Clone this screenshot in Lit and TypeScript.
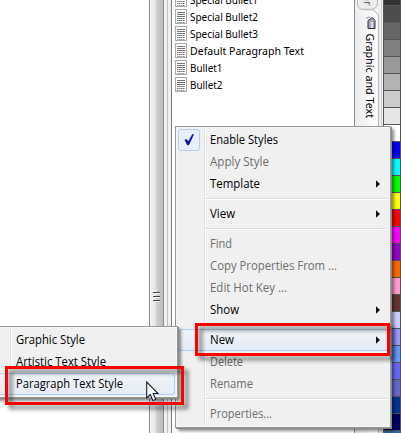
import { LitElement, html, css, svg } from "lit";
import { customElement } from "lit/decorators.js";
import { styleMap } from "lit/directives/style-map.js";

type Entry = { label: string; w: number; off?: boolean; sub?: boolean; check?: boolean; hot?: boolean } | null;

const MAIN: Entry[] = [
  { label: "Enable Styles", w: 68, check: true },
  { label: "Apply Style", w: 59, off: true },
  { label: "Template", w: 50, sub: true },
  null,
  { label: "View", w: 25, sub: true },
  null,
  { label: "Find", w: 22, off: true },
  { label: "Copy Properties From ...", w: 127, off: true },
  { label: "Edit Hot Key ...", w: 77, off: true },
  { label: "Show", w: 29, sub: true },
  null,
  { label: "New", w: 24, sub: true, hot: true },
  { label: "Delete", w: 33, off: true },
  { label: "Rename", w: 43, off: true },
  null,
  { label: "Properties...", w: 62, off: true },
];

const SUB: Entry[] = [
  { label: "Graphic Style", w: 69 },
  { label: "Artistic Text Style", w: 90 },
  { label: "Paragraph Text Style", w: 107, hot: true },
];

const STYLES: [string, number][] = [
  ["Special Bullet1", 68],
  ["Special Bullet2", 68],
  ["Special Bullet3", 68],
  ["Default Paragraph Text", 114],
  ["Bullet1", 32.5],
  ["Bullet2", 32.5],
];

const SWATCHES = [
  "#333", "#4d4d4d", "#666", "#808080", "#999", "#b3b3b3", "#ccc", "#e6e6e6", "#fff",
  "#00f", "#0ff", "#0f0", "#ff0", "#f00", "#f0f", "#90c", "#f60", "#f9c", "#633", "#ccf",
  "#99f", "#69f", "#66f", "#66c", "#039", "#006", "#36a",
];

const label = (text: string, w: number, size: number) => html`<svg class="label" width=${w + 4} height="18">
  <text x="0" y="13" font-size=${size} textLength=${w} lengthAdjust="spacingAndGlyphs">${text}</text>
</svg>`;

@customElement("popup-menu")
export class PopupMenu extends LitElement {
  static properties = { items: { attribute: false } };
  declare items: Entry[];
  static styles = css`
    :host {
      display: block;
      box-sizing: border-box;
      background: #f0f0f0;
      border: 1px solid #979797;
      padding: 2px;
      box-shadow: inset 0 0 0 1px #f6f6f6, 1px 1px 0 #8a8a8a, 3px 3px 3px rgba(0, 0, 0, 0.45);
    }
    .items { position: relative; }
    .items::before {
      content: "";
      position: absolute;
      left: 26px; top: 0; bottom: 0;
      width: 1px;
      background: #e0e0e0;
      border-right: 1px solid #fff;
    }
    .row {
      position: relative;
      box-sizing: border-box;
      height: 22px;
      display: flex;
      align-items: center;
      padding: 0 8px 0 32px;
      font-family: "Open Sans", "Noto Sans", sans-serif;
      fill: #000;
    }
    .off { fill: #6d6d6d; }
    .hot {
      background: linear-gradient(rgba(240, 244, 250, 0.9), rgba(228, 235, 246, 0.9));
      box-shadow: inset 0 0 0 1px #aecff7;
      border-radius: 3px;
    }
    .label { display: block; flex: none; overflow: visible; }
    .arrow { margin-left: auto; display: block; }
    .box {
      position: absolute;
      left: 0; top: 0;
      box-sizing: border-box;
      width: 22px; height: 22px;
      border: 1px solid #aecff7;
      border-radius: 3px;
      background: #e8eff8;
    }
    .sep { position: relative; height: 8px; display: flex; align-items: center; padding: 0 0 0 27px; }
    .sep::before { content: ""; flex: 1; height: 1px; background: #e0e0e0; border-bottom: 1px solid #fff; }
  `;
  render() {
    return html`<div class="items">
      ${this.items.map((e) =>
        e
          ? html`<div class="row ${e.off ? "off" : ""} ${e.hot ? "hot" : ""}">
              ${e.check
                ? html`<svg class="box" viewBox="0 0 20 20"><path d="M6 10 L7.5 9.5 L9.3 12 L13.5 4.5 L14.5 4.5 L9.6 15 L8.6 15 Z" fill="#0c12a1" stroke="#0c12a1" stroke-width=".8" /></svg>`
                : ""}
              ${label(e.label, e.w, 12)}
              ${e.sub ? html`<svg class="arrow" width="4" height="8"><path d="M0 0.3 L4 4 L0 7.7 Z" fill="#111" /></svg>` : ""}
            </div>`
          : html`<div class="sep"></div>`
      )}
    </div>`;
  }
}

@customElement("app-root")
export class AppRoot extends LitElement {
  static styles = css`
    :host {
      display: block;
      position: relative;
      width: 401px;
      height: 433px;
      overflow: hidden;
      background: #fff;
      font-family: "Noto Sans", sans-serif;
    }
    .window { display: flex; height: 433px; }
    .canvas { width: 149px; background: #fff; }
    .scroll {
      box-sizing: border-box;
      width: 15px;
      border: solid #8c8c8c;
      border-width: 0 1px;
      background: linear-gradient(90deg, #f3f3f3, #e9e9ea 35%, #c9c9cc 60%, #bdbdc1);
      display: flex;
      flex-direction: column;
      align-items: center;
      padding-top: 292px;
      gap: 2px;
    }
    .scroll i { width: 7px; height: 1px; background: #444; border-bottom: 1px solid #f4f4f4; }
    .gutter {
      box-sizing: border-box;
      width: 8px;
      display: flex;
      background: linear-gradient(90deg, #f0f0f0 0 3px, #c2c2c2 3px 4px, #f0f0f0 4px);
      border-right: 1px solid #777a86;
    }
    .list { width: 182px; background: #fff; overflow: hidden; }
    .items { display: flex; flex-direction: column; margin-top: -9px; padding-left: 3px; }
    .item { height: 17px; display: flex; align-items: center; gap: 3px; }
    .item svg { display: block; flex: none; overflow: visible; }
    .tabs {
      box-sizing: border-box;
      width: 29px;
      border-left: 1px solid #8b8b93;
      background: #f0f0f0;
    }
    .tabs svg { display: block; }
    .palette {
      box-sizing: border-box;
      width: 18px;
      border: solid #555;
      border-width: 0 1px;
      display: flex;
      flex-direction: column;
      overflow: hidden;
      margin-top: -12px;
    }
    .swatch { box-sizing: border-box; flex: none; height: 17px; border-bottom: 1px solid #555; }
    .swatch:first-child { height: 18px; }
    .main { position: absolute; left: 175px; top: 126px; width: 216px; height: 302px; }
    .sub { position: absolute; left: -19px; top: 326px; width: 197px; height: 72px; }
    .mark {
      position: absolute;
      box-sizing: border-box;
      border: 3px solid #f00;
      filter: drop-shadow(4px 4px 2px rgba(0, 0, 0, 0.55));
    }
    .m1 { left: 195px; top: 323px; width: 195px; height: 33px; }
    .m2 { left: 5px; top: 366px; width: 179px; height: 39px; }
    .cursor { position: absolute; left: 146px; top: 381px; }
  `;

  render() {
    return html`
      <div class="window">
        <div class="canvas"></div>
        <div class="scroll"><i></i><i></i><i></i></div>
        <div class="gutter"></div>
        <div class="list">
          <div class="items">
            ${STYLES.map(
              ([t, w]) => html`<div class="item">
                <svg width="12" height="15">
                  <rect x=".5" y=".5" width="11" height="14" fill="#fff" stroke="#aaa" />
                  <path d="M2 3.5H10M2 5.5H10M2 7.5H10M2 9.5H10M2 11.5H10" stroke="#777" />
                  <path d="M2 13.5H10" stroke="#999" />
                  <path d="M3.5 8V14M5.5 8V14M7.5 8V14M9.5 8V14" stroke="#fff" stroke-opacity=".4" />
                </svg>
                ${label(t, w, 11.5)}
              </div>`
            )}
          </div>
        </div>
        <div class="tabs">
          <svg width="28" height="433">
            <defs>
              <linearGradient id="g"><stop offset="0" stop-color="#ececee" /><stop offset="1" stop-color="#fff" /></linearGradient>
            </defs>
            <rect x="0" y="10" width="23" height="423" fill="url(#g)" />
            <path d="M2.5 -2V5Q3 9 8 9.5H16Q21.500 9 22.500 4V-2" fill="#ededed" stroke="#b5b5b5" />
            <path d="M9 9.500H17Q21 11 23.500 15V433" fill="none" stroke="#bcbcbc" stroke-width="1.3" />
            <path d="M26.500 0V433" stroke="#d0d0d0" />
            <text transform="translate(8.500 -5.500) rotate(90)" font-size="11.500" fill="#666">er</text>
            <path d="M13.500 20.500L18 17.500L20.500 20.500V28.500H13.500Z" transform="translate(-.5 0)" fill="#a5a5b8" stroke="#303040" />
            <path d="M17 22V28" stroke="#ddddea" stroke-width="2" />
            <path d="M16 20Q16 17 14 17Q11.500 17 11.500 19" fill="none" stroke="#8686a6" />
            <text transform="translate(11 33.500) rotate(90)" font-size="11.500" textLength="84.500" lengthAdjust="spacingAndGlyphs">Graphic and Text</text>
          </svg>
        </div>
        <div class="palette">
          ${SWATCHES.map((c) => html`<div class="swatch" style=${styleMap({ background: c })}></div>`)}
        </div>
      </div>
      <popup-menu class="main" .items=${MAIN}></popup-menu>
      <popup-menu class="sub" .items=${SUB}></popup-menu>
      <div class="mark m1"></div>
      <div class="mark m2"></div>
      <svg class="cursor" width="14" height="21">
        <path d="M.7 1V17L4.300 13.500L7 19.600L9.700 18.400L7.100 12.500H12Z" fill="#fff" stroke="#1c1c30" stroke-width="1.100" />
      </svg>
    `;
  }
}
